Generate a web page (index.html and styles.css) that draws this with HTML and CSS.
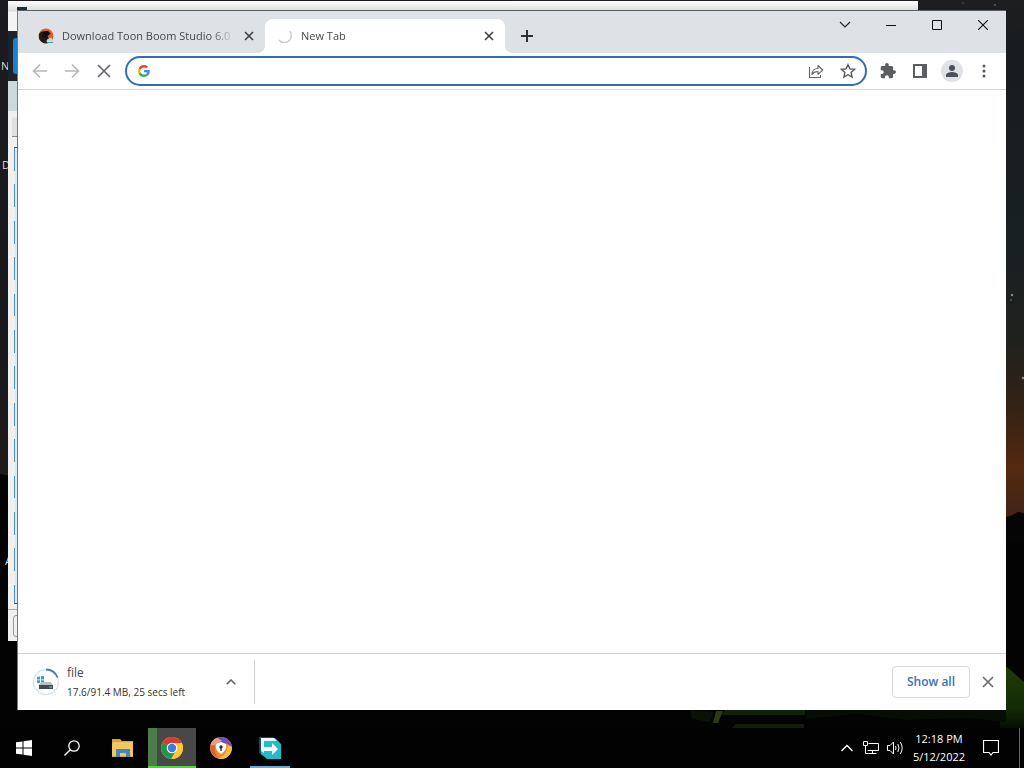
FILE: index.html
```html
<!DOCTYPE html>
<html lang="en">
<head>
    <meta charset="UTF-8">
    <meta name="viewport" content="width=device-width, initial-scale=1.0">
    <title>New Tab</title>
    <link rel="stylesheet" href="styles.css">
</head>
<body>
    <svg class="wallpaper" viewBox="0 0 1024 768" preserveAspectRatio="none" aria-hidden="true">
        <defs>
            <linearGradient id="sky" x1="0" y1="0" x2="0" y2="1">
                <stop offset="0" stop-color="#1e1e20"/>
                <stop offset=".1" stop-color="#181c1f"/>
                <stop offset=".45" stop-color="#182023"/>
                <stop offset=".65" stop-color="#1f211d"/>
                <stop offset=".78" stop-color="#332216"/>
                <stop offset=".9" stop-color="#54290f"/>
                <stop offset="1" stop-color="#40241a"/>
            </linearGradient>
            <linearGradient id="skyLeft" x1="0" y1="0" x2="0" y2="1">
                <stop offset="0" stop-color="#1c1b20"/>
                <stop offset=".7" stop-color="#17181c"/>
                <stop offset="1" stop-color="#201c18"/>
            </linearGradient>
            <linearGradient id="tent" x1="0" y1="0" x2="0" y2="1">
                <stop offset="0" stop-color="#1f3d0b"/>
                <stop offset=".7" stop-color="#142a06"/>
                <stop offset="1" stop-color="#060d02"/>
            </linearGradient>
        </defs>
        <rect width="1024" height="768" fill="#020302"/>
        <rect width="1024" height="520" fill="url(#sky)"/>
        <rect width="512" height="476" fill="url(#skyLeft)"/>
        <path d="M0 474l60 10v50H0z" fill="#020302"/>
        <path d="M1000 518l10-2 8-4 6 1v30h-24z" fill="#050505"/>
        <path d="M1000 663l8 5 16 14v46h-24z" fill="url(#tent)"/>
        <path d="M725 710h80v5h-84z" fill="#12210a"/>
        <path d="M690 710l24 2-4 10-18-3z" fill="#0a1205"/>
        <path d="M716 711h7l-5 12h-5z" fill="#2a3a17"/>
        <path d="M736 724h68v4h-72z" fill="#141c10"/>
        <path d="M806 710h200v12l-40-4-60 2-50-6-50 5z" fill="#070c05"/>
        <g fill="#8b8f8a">
            <circle cx="1012" cy="295" r="1.2"/>
            <circle cx="1011" cy="300" r=".7"/>
            <circle cx="1023" cy="378" r="1.3"/>
            <circle cx="963" cy="3" r=".6"/>
            <circle cx="995" cy="5" r=".7"/>
        </g>
    </svg>

    <div class="desktop">
        <span class="desktop-label label-n">N</span>
        <span class="desktop-label label-d">D</span>
        <span class="desktop-label label-a">A</span>

        <div class="back-window">
            <div class="back-title"><span class="back-icon"></span></div>
            <div class="back-header"><span class="back-logo"></span></div>
            <div class="back-menu"></div>
            <div class="back-tools"></div>
            <div class="back-list"></div>
            <div class="back-footer"><span class="back-box"></span></div>
        </div>

        <main class="browser">
            <header class="tab-strip">
                <div class="tab">
                    <svg class="tab-icon" viewBox="0 0 16 16">
                        <circle cx="8" cy="8" r="7.5" fill="#d9622f"/>
                        <path d="M1 6c2-3 5-3 9-3l3 3c-2 0-3 1-3 3l1 2-1 4c-4 1-8-1-9-5z" fill="#241b1b"/>
                        <path d="M5 4l5-1 2 3-3 1-1 3-4-1z" fill="#110e10"/>
                        <path d="M9 14.500c-1-2 0-3.500 1.500-3.500 1-2 4-1 4 1 1.500 0 1.500 3 0 3H9z" fill="#b8e4dc"/>
                        <path d="M9 14h6v1H9z" fill="#39a999"/>
                    </svg>
                    <span class="tab-title">Download Toon Boom Studio 6.0</span>
                    <button class="tab-close" aria-label="Close tab">
                        <svg width="10" height="10" viewBox="0 0 10 10"><path d="M1 1l8 8M9 1L1 9" stroke="#3c4043" stroke-width="1.6"/></svg>
                    </button>
                </div>
                <div class="tab active">
                    <svg class="tab-icon" viewBox="0 0 16 16"><path d="M12.8 3.2A6.6 6.6 0 0 1 2 12" fill="none" stroke="#c6c8ca" stroke-width="1.4"/></svg>
                    <span class="tab-title">New Tab</span>
                    <button class="tab-close" aria-label="Close tab">
                        <svg width="10" height="10" viewBox="0 0 10 10"><path d="M1 1l8 8M9 1L1 9" stroke="#3c4043" stroke-width="1.6"/></svg>
                    </button>
                </div>
                <button class="new-tab" aria-label="New tab">
                    <svg width="12" height="12" viewBox="0 0 12 12"><path d="M6 0v12M0 6h12" stroke="#2f3235" stroke-width="2"/></svg>
                </button>
                <div class="window-buttons">
                    <button aria-label="Search tabs"><svg width="12" height="8" viewBox="0 0 12 8"><path d="M1 1l5 5 5-5" fill="none" stroke="#222" stroke-width="1.1"/></svg></button>
                    <button aria-label="Minimize"><svg width="10" height="10" viewBox="0 0 10 10"><path d="M0 5.5h10" stroke="#111"/></svg></button>
                    <button aria-label="Maximize"><svg width="10" height="10" viewBox="0 0 10 10"><path d="M.5.5h9v9h-9z" fill="none" stroke="#111"/></svg></button>
                    <button aria-label="Close"><svg width="10" height="10" viewBox="0 0 10 10"><path d="M0 0l10 10M10 0L0 10" stroke="#111" stroke-width="1.1"/></svg></button>
                </div>
            </header>

            <nav class="toolbar">
                <button class="tool" aria-label="Back"><svg width="16" height="16" viewBox="0 0 16 16"><path d="M15 8H2M8 1.5L1.5 8 8 14.5" fill="none" stroke="#b5b7b9" stroke-width="1.6"/></svg></button>
                <button class="tool" aria-label="Forward"><svg width="16" height="16" viewBox="0 0 16 16"><path d="M1 8h13M8 1.5L14.5 8 8 14.5" fill="none" stroke="#b5b7b9" stroke-width="1.6"/></svg></button>
                <button class="tool" aria-label="Stop"><svg width="14" height="14" viewBox="0 0 14 14"><path d="M1 1l12 12M13 1L1 13" stroke="#5f6368" stroke-width="1.6"/></svg></button>
                <div class="omnibox">
                    <svg width="12" height="12" viewBox="0 0 48 48">
                        <path fill="#ea4335" d="M24 9.5c3.54 0 6.71 1.22 9.21 3.6l6.85-6.85C35.9 2.38 30.47 0 24 0 14.62 0 6.51 5.38 2.56 13.22l7.98 6.19C12.43 13.72 17.74 9.5 24 9.5z"/>
                        <path fill="#4285f4" d="M46.98 24.55c0-1.57-.15-3.09-.38-4.55H24v9.02h12.94c-.58 2.96-2.26 5.48-4.78 7.18l7.73 6c4.51-4.18 7.09-10.36 7.09-17.65z"/>
                        <path fill="#fbbc05" d="M10.53 28.59c-.48-1.45-.76-2.99-.76-4.59s.27-3.14.76-4.59l-7.98-6.19C.92 16.46 0 20.12 0 24s.92 7.54 2.56 10.78z"/>
                        <path fill="#34a853" d="M24 48c6.48 0 11.93-2.13 15.89-5.81l-7.73-6c-2.15 1.45-4.92 2.3-8.16 2.3-6.26 0-11.57-4.22-13.47-9.91l-7.98 6.19C6.51 42.62 14.62 48 24 48z"/>
                    </svg>
                    <input type="text" class="address" aria-label="Address and search bar">
                    <button class="tool" aria-label="Share"><svg width="16" height="16" viewBox="0 0 16 16"><path d="M1.5 4v10.5h11V12M4 11.5c.3-4 2.5-6 6-6V2.500l4.800 4.500L10 11.300V8.500c-2.600 0-4.500.8-6 3z" fill="none" stroke="#5f6368" stroke-width="1.1" stroke-linejoin="round"/></svg></button>
                    <button class="tool" aria-label="Bookmark this tab"><svg width="16" height="16" viewBox="0 0 16 16"><path d="M8 1.700l1.900 4.200 4.600.5-3.400 3.100.9 4.500L8 11.700 4 14l.9-4.500-3.400-3.100 4.600-.5z" fill="none" stroke="#55585d" stroke-width="1.4"/></svg></button>
                </div>
                <button class="tool" aria-label="Extensions"><svg width="16" height="16" viewBox="1 1 22 22"><path fill="#5a5d61" d="M20.500 11H19V7c0-1.100-.9-2-2-2h-4V3.500a2.500 2.500 0 0 0-5 0V5H4c-1.100 0-2 .9-2 2v3.800h1.500a2.700 2.700 0 0 1 0 5.400H2V20c0 1.100.9 2 2 2h3.800v-1.500a2.700 2.700 0 0 1 5.400 0V22H17c1.100 0 2-.9 2-2v-4h1.500a2.500 2.500 0 0 0 0-5z"/></svg></button>
                <button class="tool" aria-label="Side panel"><svg width="14" height="14" viewBox="0 0 14 14"><path d="M1 1h12v12H1z" fill="#fff" stroke="#5a5d61" stroke-width="2"/><path d="M9 1h4v12H9z" fill="#5a5d61"/></svg></button>
                <button class="tool" aria-label="Profile"><svg width="22" height="22" viewBox="0 0 22 22"><circle cx="11" cy="11" r="11" fill="#dee1e6"/><circle cx="11" cy="8" r="3" fill="#4b4f5c"/><path d="M5 17v-2c0-2 4-3 6-3s6 1 6 3v2z" fill="#4b4f5c"/></svg></button>
                <button class="tool" aria-label="Menu"><svg width="4" height="14" viewBox="0 0 4 14"><g fill="#55585c"><circle cx="2" cy="2" r="1.500"/><circle cx="2" cy="7" r="1.500"/><circle cx="2" cy="12" r="1.500"/></g></svg></button>
            </nav>

            <section class="page"></section>

            <footer class="downloads">
                <div class="download">
                    <svg width="28" height="28" viewBox="0 0 28 28">
                        <circle cx="14" cy="14" r="12.500" fill="#fff" stroke="#d8e6ef" stroke-width="1.500"/>
                        <path d="M14 1.500a12.500 12.500 0 0 1 11.500 8" fill="none" stroke="#4b7f9c" stroke-width="2"/>
                        <path d="M5 9l3-.5v3H5zM9 8.300l3-.3v3.500H9zM5 12.300h3V15l-3-.3zM9 12.300h3v3.200L9 15z" fill="#23a5cf"/>
                        <path d="M9 14h10l2 3H7z" fill="#b9c0c4"/>
                        <path d="M7 17h14v4H7z" fill="#42484d"/>
                        <path d="M17 18.500h3v1h-3z" fill="#6bd1c0"/>
                    </svg>
                    <div class="download-text">
                        <div class="file-name">file</div>
                        <div class="file-status">17.6/91.4 MB, 25 secs left</div>
                    </div>
                    <button class="tool" aria-label="Download options"><svg width="10" height="6" viewBox="0 0 10 6"><path d="M.7 5.300L5 1l4.300 4.300" fill="none" stroke="#5f6368" stroke-width="1.600"/></svg></button>
                </div>
                <button class="show-all">Show all</button>
                <button class="downloads-close" aria-label="Close downloads bar"><svg width="12" height="12" viewBox="0 0 12 12"><path d="M1 1l10 10M11 1L1 11" stroke="#6a6d70" stroke-width="1.700"/></svg></button>
            </footer>
        </main>
    </div>

    <footer class="taskbar">
        <button class="task" aria-label="Start"><svg width="16" height="16" viewBox="0 0 16 16"><path d="M0 2.300l6.500-.9v6.100H0zM7.500 1.200L16 0v7.500H7.500zM0 8.500h6.500v6.100L0 13.700zM7.500 8.500H16V16l-8.500-1.200z" fill="#fff"/></svg></button>
        <button class="task" aria-label="Search"><svg width="16" height="16" viewBox="0 0 16 16"><circle cx="10" cy="6" r="5.200" fill="none" stroke="#fff" stroke-width="1.300"/><path d="M6.300 9.700L.5 15.500" stroke="#fff" stroke-width="1.400"/></svg></button>
        <div class="apps">
            <button class="task" aria-label="File Explorer"><svg width="22" height="20" viewBox="0 0 22 20"><path d="M0 1h8l2 2h11v16H0z" fill="#d9a436"/><path d="M1 4h20v14H0V6z" fill="#f0c760"/><path d="M4 19v-8h14v8h-4v-4H8v4z" fill="#4287b8"/></svg></button>
            <button class="task current" aria-label="Google Chrome"><svg width="24" height="24" viewBox="0 0 24 24"><circle cx="12" cy="12" r="11" fill="#fcc934"/><path d="M12 12L2.500 6.500a11 11 0 0 1 19 0z" fill="#d93b30"/><path d="M12 12L2.500 6.500a11 11 0 0 0 8.500 16.400L17 13z" fill="#229748"/><path d="M12 7h10a11 11 0 0 0-1-1.500H9z" fill="#d93b30"/><path d="M12 7h9.800a11 11 0 0 1-9.800 16l5-9z" fill="#fcc934"/><circle cx="12" cy="12" r="5.300" fill="#fff"/><circle cx="12" cy="12" r="4.200" fill="#397de0"/></svg></button>
            <button class="task" aria-label="Secure Browser"><svg width="24" height="24" viewBox="0 0 24 24"><circle cx="12" cy="12" r="11" fill="#f08a2d"/><path d="M7 2.200A11 11 0 0 1 22.800 11l-4-3L7 6z" fill="#6b50c5"/><path d="M22.800 11A11 11 0 0 1 9 22.600c5-2 9-5 10-13z" fill="#f3c23d"/><path d="M1.500 9A11 11 0 0 1 8 1.800l5 3-7 4z" fill="#e3a07c"/><path d="M1.200 10c0 5 3 10 8 12-3-4-4-8-3-13z" fill="#d9652c"/><path d="M12 6l5 2c1 5-1 7-5 10-4-3-6-5-5-10z" fill="#fff"/><circle cx="12" cy="11" r="1.700" fill="#302c40"/><path d="M11.300 11h1.400v4h-1.400z" fill="#302c40"/></svg></button>
            <button class="task running" aria-label="Installer"><svg width="24" height="24" viewBox="0 0 24 24"><path d="M1 1h14l3 3-13 16-4-3z" fill="#174c68"/><path d="M3 2h14l6 6v15H9l-6-5z" fill="#20bccf"/><path d="M3 2h13l3 3H6v12l-3-2z" fill="#e8fbfc"/><path d="M6 11h8V7l6 6-6 6v-4H6z" fill="#fff"/></svg></button>
        </div>
        <div class="tray">
            <button class="tray-item" aria-label="Show hidden icons"><svg width="12" height="8" viewBox="0 0 12 8"><path d="M.5 7L6 1.500 11.500 7" fill="none" stroke="#fff" stroke-width="1.400"/></svg></button>
            <button class="tray-item" aria-label="Network"><svg width="16" height="14" viewBox="0 0 16 14"><path d="M5.500 2.500h10v7h-11M9.500 9.500v3M5.500 12.500h8M.5.500h4v4h-4zM2.500 4.500v8h3" fill="none" stroke="#fff"/></svg></button>
            <button class="tray-item" aria-label="Volume"><svg width="17" height="14" viewBox="0 0 17 14"><path d="M.5 4.500h2.500L6.500 1v12L3 9.500H.5zM8.500 5q1 2 0 4M10.800 3q2.400 4 0 8M13.200 1q4 6 0 12" fill="none" stroke="#fff"/></svg></button>
            <button class="clock"><span>12:18 PM</span><span>5/12/2022</span></button>
            <button class="notifications" aria-label="Notifications"><svg width="16" height="16" viewBox="0 0 16 16"><path d="M.5.500h15v12H10L8 15l-2-2.500H.5z" fill="none" stroke="#fff" stroke-width="1.200"/></svg></button>
            <button class="show-desktop" aria-label="Show desktop"></button>
        </div>
    </footer>
</body>
</html>
```
FILE: styles.css
```css
* {
    box-sizing: border-box;
}
body {
    margin: 0;
    height: 100vh;
    display: flex;
    flex-direction: column;
    overflow: hidden;
    background: #020302;
    font-family: "Open Sans", "Noto Sans", sans-serif;
    font-size: 11px;
}
button {
    display: flex;
    align-items: center;
    justify-content: center;
    padding: 0;
    border: none;
    background: none;
    color: inherit;
    font: inherit;
}
svg {
    flex: none;
}
.wallpaper {
    position: absolute;
    inset: 0;
    width: 100%;
    height: 100%;
    z-index: -1;
}
.desktop {
    position: relative;
    flex: 1;
}
.desktop-label {
    position: absolute;
    color: #ddd;
    line-height: 16px;
}
.label-n {
    left: 1px;
    top: 58px;
}
.label-d {
    left: 2px;
    top: 157px;
}
.label-a {
    left: 5px;
    top: 553px;
}

/* window behind the browser */
.back-window {
    position: absolute;
    inset: 1px 106px 87px 8px;
    display: flex;
    flex-direction: column;
    background: #f0f0f0;
}
.back-title {
    height: 30px;
    padding: 6px 9px;
    background: linear-gradient(#fff, #dcdcdc 10px, #f4f4f4 11px);
}
.back-icon {
    display: block;
    width: 10px;
    height: 8px;
    background: #15303f;
}
.back-header {
    height: 50px;
    padding: 7px 5px;
    background: #20222b;
}
.back-logo {
    display: block;
    width: 40px;
    height: 36px;
    border-radius: 3px;
    background: #1c82cf;
}
.back-menu {
    height: 30px;
    background: #cbd9dc;
}
.back-tools {
    height: 26px;
    margin: 0 4px 10px;
    border-bottom: 1px solid #888;
    background: linear-gradient(#f0f0f0 6px, #e1e1e1 7px);
}
.back-list {
    flex: 1;
    margin: 0 6px;
    border-top: 1px solid #557;
    border-bottom: 1px solid #557;
    background: repeating-linear-gradient(#5391bb 0 5%, #e8f1f6 5% 8%) 0 0 / 1px 100% no-repeat, #d8e9f4;
}
.back-footer {
    height: 32px;
    margin-top: 5px;
    padding: 5px;
    border-top: 1px solid #aaa;
}
.back-box {
    display: block;
    width: 60px;
    height: 22px;
    border: 1px solid #999;
    border-radius: 3px;
}

/* browser */
.browser {
    position: absolute;
    inset: 10px 18px 18px;
    display: flex;
    flex-direction: column;
    border-top: 1px solid #5d5e62;
    background: #fff;
    color: #45484c;
    box-shadow: -1px 0 #77797c;
}
.tab-strip {
    height: 42px;
    padding: 8px 0 0 8px;
    display: flex;
    background: #dee1e6;
}
.tab {
    width: 239px;
    padding: 0 10px 0 12px;
    display: flex;
    align-items: center;
}
.tab.active {
    position: relative;
    width: 240px;
    border-radius: 8px 8px 0 0;
    background: #fff;
}
.tab.active::before,
.tab.active::after {
    content: "";
    position: absolute;
    bottom: 0;
    width: 8px;
    height: 8px;
}
.tab.active::before {
    right: 100%;
    background: radial-gradient(circle at 0 0, transparent 8px, #fff 8px);
}
.tab.active::after {
    left: 100%;
    background: radial-gradient(circle at 100% 0, transparent 8px, #fff 8px);
}
.tab-icon {
    width: 16px;
    height: 16px;
}
.tab-title {
    flex: 1;
    margin: 0 8px;
    font-size: 11px;
    line-height: 16px;
    padding-bottom: 1px;
    overflow: hidden;
    white-space: nowrap;
    mask-image: linear-gradient(to left, transparent, #000 24px);
}
.tab-close {
    width: 12px;
    height: 16px;
}
.new-tab {
    width: 28px;
    margin-left: 8px;
}
.window-buttons {
    display: flex;
    height: 28px;
    margin: -8px 0 0 auto;
}
.window-buttons button {
    width: 46px;
}
.toolbar {
    height: 37px;
    padding: 0 6px;
    display: flex;
    align-items: center;
    border-bottom: 1px solid #d5d7da;
}
.tool {
    flex: none;
    width: 32px;
    height: 26px;
}
.omnibox {
    flex: 1;
    height: 30px;
    margin: 0 5px;
    padding: 0 1px 0 11px;
    display: flex;
    align-items: center;
    border: 2px solid #2f6cb9;
    border-radius: 15px;
}
.address {
    flex: 1;
    min-width: 0;
    margin-left: 8px;
    border: none;
    outline: none;
    background: none;
    font: inherit;
}
.page {
    flex: 1;
}
.downloads {
    height: 57px;
    padding: 5px 8px 6px 14px;
    display: flex;
    align-items: center;
    border-top: 1px solid #d2d0d3;
}
.download {
    width: 223px;
    height: 44px;
    padding-right: 7px;
    display: flex;
    align-items: center;
    border-right: 1px solid #cfd0d2;
}
.download-text {
    flex: 1;
    margin-left: 7px;
}
.file-name {
    font-size: 12px;
    line-height: 20px;
}
.file-status {
    font-size: 10px;
    line-height: 18px;
    white-space: nowrap;
    color: #333;
}
.show-all {
    width: 78px;
    height: 32px;
    margin-left: auto;
    border: 1px solid #d6d8dc;
    border-radius: 4px;
    color: #3b70b4;
    font-size: 12px;
    font-weight: 600;
}
.downloads-close {
    width: 20px;
    height: 20px;
    margin-left: 8px;
}

/* taskbar */
.taskbar {
    height: 40px;
    display: flex;
    background: #020202;
    color: #fff;
}
.task {
    width: 48px;
    height: 40px;
}
.apps {
    display: flex;
    gap: 1px;
    margin-left: 3px;
}
.current {
    border-bottom: 2px solid #52d241;
    background: linear-gradient(to right, #4b7d48 9px, #474847 9px);
}
.current svg,
.running svg {
    margin-top: 2px;
}
.running {
    width: 40px;
    margin-left: 4px;
    border-bottom: 2px solid #69a9d2;
}
.tray {
    display: flex;
    margin-left: auto;
}
.tray-item {
    width: 24px;
}
.clock {
    width: 64px;
    flex-direction: column;
    line-height: 18px;
}
.notifications {
    width: 40px;
}
.show-desktop {
    width: 5px;
    margin-left: 8px;
    border-left: 1px solid #666;
}
```
